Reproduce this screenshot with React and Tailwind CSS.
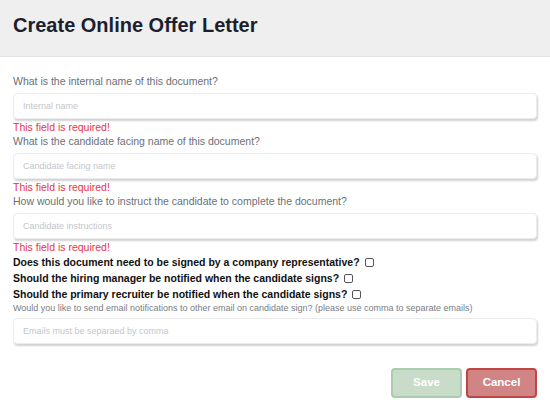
import React from "react";

const inputCls =
  "w-full h-[26px] px-[9px] rounded-[4px] bg-white border border-[#ececec] shadow-[1px_2px_2px_rgba(0,0,0,0.18)] text-[9px] placeholder:text-[#c4c6ca] outline-none";

const Field = ({ label, placeholder }) => (
  <div className="flex flex-col">
    <label className="text-[10.5px] leading-[14px] text-[#6b6f76] mb-[5px]">{label}</label>
    <input type="text" placeholder={placeholder} className={inputCls} />
    <span className="text-[10.5px] leading-[14px] text-[#e8334a] mt-[1px]">This field is required!</span>
  </div>
);

const Check = ({ label }) => (
  <div className="flex items-center gap-[5px] text-[10.5px] leading-[16px] font-bold text-[#111]">
    {label}
    <span className="inline-block w-[9px] h-[9px] border border-[#555] rounded-[2px] bg-white" />
  </div>
);

const App = () => {
  return (
    <div className="w-[550px] h-[413px] bg-white font-['Liberation_Sans',Arial,sans-serif]">
      <div className="h-[57px] bg-[#efefef] border-b border-[#e2e2e2] flex items-center px-[13px]">
        <h1 className="text-[20px] font-bold text-[#1b1f2e] -mt-[7px]">Create Online Offer Letter</h1>
      </div>
      <div className="px-[13px] pt-[17px] flex flex-col">
        <Field label="What is the internal name of this document?" placeholder="Internal name" />
        <Field label="What is the candidate facing name of this document?" placeholder="Candidate facing name" />
        <Field label="How would you like to instruct the candidate to complete the document?" placeholder="Candidate instructions" />
        <Check label="Does this document need to be signed by a company representative?" />
        <Check label="Should the hiring manager be notified when the candidate signs?" />
        <Check label="Should the primary recruiter be notified when the candidate signs?" />
        <span className="text-[9px] leading-[12px] text-[#7a7d82] mb-[4px]">
          Would you like to send email notifications to other email on candidate sign? (please use comma to separate emails)
        </span>
        <input type="text" placeholder="Emails must be separaed by comma" className={inputCls} />
        <div className="flex justify-end gap-[4px] mt-[24px]">
          <button className="w-[71px] h-[30px] rounded-[4px] bg-[#c8dcc9] border-2 border-[#a9ceab] text-white text-[11.5px] font-bold">
            Save
          </button>
          <button className="w-[71px] h-[30px] rounded-[4px] bg-[#d08584] border-2 border-[#c24545] text-white text-[11.5px] font-bold">
            Cancel
          </button>
        </div>
      </div>
    </div>
  );
};

export default App;
